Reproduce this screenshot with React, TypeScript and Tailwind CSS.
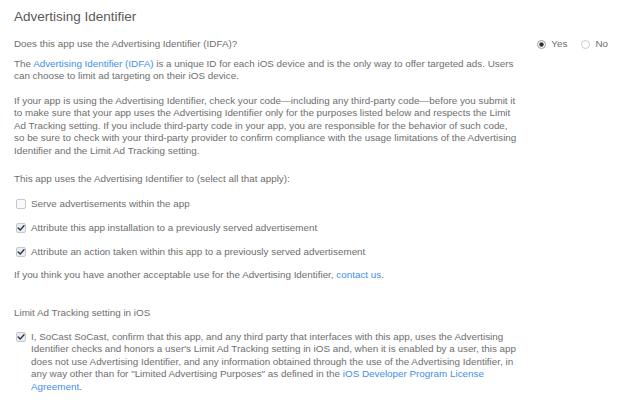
import React from "react"

const font = { fontFamily: '"Liberation Sans", Arial, sans-serif' }

function Box({ checked }: { checked?: boolean }) {
  return (
    <svg width="10" height="10" viewBox="0 0 10 10" className="shrink-0">
      <rect x="0.5" y="0.5" width="9" height="9" rx="1.5" fill={checked ? "#e9edf3" : "#fafafa"} stroke="#c4c7cc" />
      {checked && <path d="M2.2 5.1 L4.2 7 L8 2.8" fill="none" stroke="#2f3847" strokeWidth="1.4" strokeLinecap="round" strokeLinejoin="round" />}
    </svg>
  )
}

function Radio({ on }: { on?: boolean }) {
  return (
    <svg width="9" height="9" viewBox="0 0 9 9" className="shrink-0">
      <circle cx="4.5" cy="4.5" r="4" fill="#fff" stroke={on ? "#9a9da3" : "#c9cbcf"} />
      {on && <circle cx="4.5" cy="4.5" r="2.2" fill="#2b2f36" />}
    </svg>
  )
}

const Link = ({ children }: { children: React.ReactNode }) => <span className="text-[#3f8fe8]">{children}</span>

const uses = [
  { label: "Serve advertisements within the app", checked: false },
  { label: "Attribute this app installation to a previously served advertisement", checked: true },
  { label: "Attribute an action taken within this app to a previously served advertisement", checked: true },
]

export default function App() {
  return (
    <div style={font} className="h-[400px] w-[633px] overflow-hidden whitespace-nowrap bg-white pl-[14px] pr-[25px] pt-[7px] text-[9.85px] leading-[12.5px] text-[#6e6e6e]">
      <h1 className="text-[13.5px] leading-[20px] text-[#5a5a5a]">Advertising Identifier</h1>

      <div className="mt-[11px] flex items-center justify-between">
        <p>Does this app use the Advertising Identifier (IDFA)?</p>
        <div className="flex items-center gap-[5px]">
          <Radio on />
          <span className="mr-[9px]">Yes</span>
          <Radio />
          <span>No</span>
        </div>
      </div>

      <p className="mt-[7px]">
        The <Link>Advertising Identifier (IDFA)</Link> is a unique ID for each iOS device and is the only way to offer targeted ads. Users
        <br />
        can choose to limit ad targeting on their iOS device.
      </p>

      <p className="mt-[12px]">
        If your app is using the Advertising Identifier, check your code—including any third-party code—before you submit it
        <br />
        to make sure that your app uses the Advertising Identifier only for the purposes listed below and respects the Limit
        <br />
        Ad Tracking setting. If you include third-party code in your app, you are responsible for the behavior of such code,
        <br />
        so be sure to check with your third-party provider to confirm compliance with the usage limitations of the Advertising
        <br />
        Identifier and the Limit Ad Tracking setting.
      </p>

      <p className="mt-[16px]">This app uses the Advertising Identifier to (select all that apply):</p>

      <div className="mt-[12.5px] flex flex-col gap-[11.5px]">
        {uses.map((u) => (
          <label key={u.label} className="flex items-center gap-[5px] pl-[2px]">
            <Box checked={u.checked} />
            <span>{u.label}</span>
          </label>
        ))}
      </div>

      <p className="mt-[10.5px]">
        If you think you have another acceptable use for the Advertising Identifier, <Link>contact us</Link>.
      </p>

      <p className="mt-[25.5px]">Limit Ad Tracking setting in iOS</p>

      <div className="mt-[12.5px] flex items-start gap-[5px] pl-[2px]">
        <Box checked />
        <p className="-mt-[1.5px]">
          I, SoCast SoCast, confirm that this app, and any third party that interfaces with this app, uses the Advertising
          <br />
          Identifier checks and honors a user's Limit Ad Tracking setting in iOS and, when it is enabled by a user, this app
          <br />
          does not use Advertising Identifier, and any information obtained through the use of the Advertising Identifier, in
          <br />
          any way other than for "Limited Advertising Purposes" as defined in the <Link>iOS Developer Program License</Link>
          <br />
          <Link>Agreement</Link>.
        </p>
      </div>
    </div>
  )
}
